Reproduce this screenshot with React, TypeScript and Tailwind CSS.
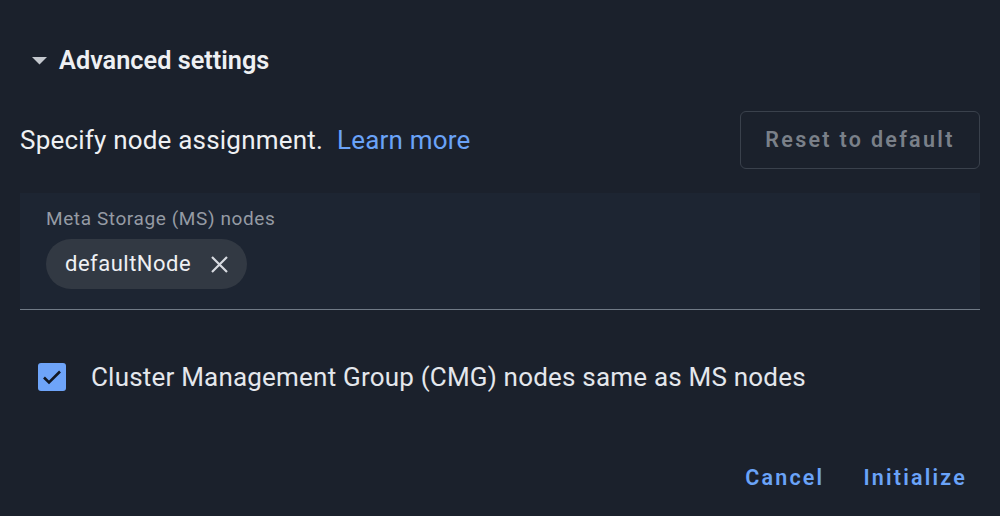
export default function App() {
  return (
    <div
      className="w-[1000px] h-[516px] bg-[#1b212c] text-[#e4e7ec] overflow-hidden"
      style={{ fontFamily: 'Roboto, "Liberation Sans", sans-serif' }}
    >
      <div className="px-5 pt-[39px]">
        {/* Section header */}
        <div className="flex items-center h-[44px] pl-3">
          <svg width="15" height="8" viewBox="0 0 15 8" className="mr-[12px]">
            <path d="M0 0 L15 0 L7.5 7.5 Z" fill="#c4c8ce" />
          </svg>
          <span className="text-[25.3px] leading-[30px] font-semibold text-[#eef0f3]">Advanced settings</span>
        </div>

        {/* Node assignment row */}
        <div className="flex items-center justify-between mt-[28px]">
          <div className="text-[26px] leading-[30px] tracking-[0.2px] text-[#eef0f3]">
            Specify node assignment.
            <a href="#" className="text-[#6aa3f8] ml-[14px]">Learn more</a>
          </div>
          <button className="h-[58px] w-[240px] rounded-[6px] border border-[#3a414c] text-[21.5px] font-semibold tracking-[2.3px] text-[#7a8089]">
            Reset to default
          </button>
        </div>

        {/* Field */}
        <div className="mt-[24px] bg-[#1d2532] border-b border-[#707a86] pl-[26px] pt-[14px] pb-[20px]">
          <div className="text-[19px] leading-[24px] text-[#959ba4] tracking-[0.6px]">Meta Storage (MS) nodes</div>
          <div className="mt-[8px] inline-flex items-center h-[50px] rounded-full bg-[#323943] pl-[19px] pr-[19px]">
            <span className="text-[22px] leading-[28px] text-[#eef0f3] tracking-[0.5px]">defaultNode</span>
            <svg width="17" height="17" viewBox="0 0 17 17" className="ml-[20px]">
              <path d="M1 1 L16 16 M16 1 L1 16" stroke="#d7dae0" strokeWidth="2.2" fill="none" />
            </svg>
          </div>
        </div>

        {/* Checkbox */}
        <div className="flex items-center mt-[53px] pl-[18px]">
          <div className="w-[28px] h-[28px] rounded-[3px] bg-[#6ea4f9] flex items-center justify-center">
            <svg width="20" height="16" viewBox="0 0 20 16">
              <path d="M2 8.5 L7 13.5 L18 2.5" fill="none" stroke="#121722" strokeWidth="2.6" />
            </svg>
          </div>
          <span className="ml-[25px] text-[26px] leading-[28px] tracking-[0.2px] text-[#e4e7ec]">
            Cluster Management Group (CMG) nodes same as MS nodes
          </span>
        </div>

        {/* Actions */}
        <div className="flex justify-end items-center mt-[73px] pr-[13px] gap-[39px]">
          <button className="text-[21.5px] leading-[28px] font-semibold tracking-[2.2px] text-[#6aa3f8]">Cancel</button>
          <button className="text-[21.5px] leading-[28px] font-semibold tracking-[2.2px] text-[#6aa3f8]">Initialize</button>
        </div>
      </div>
    </div>
  );
}
